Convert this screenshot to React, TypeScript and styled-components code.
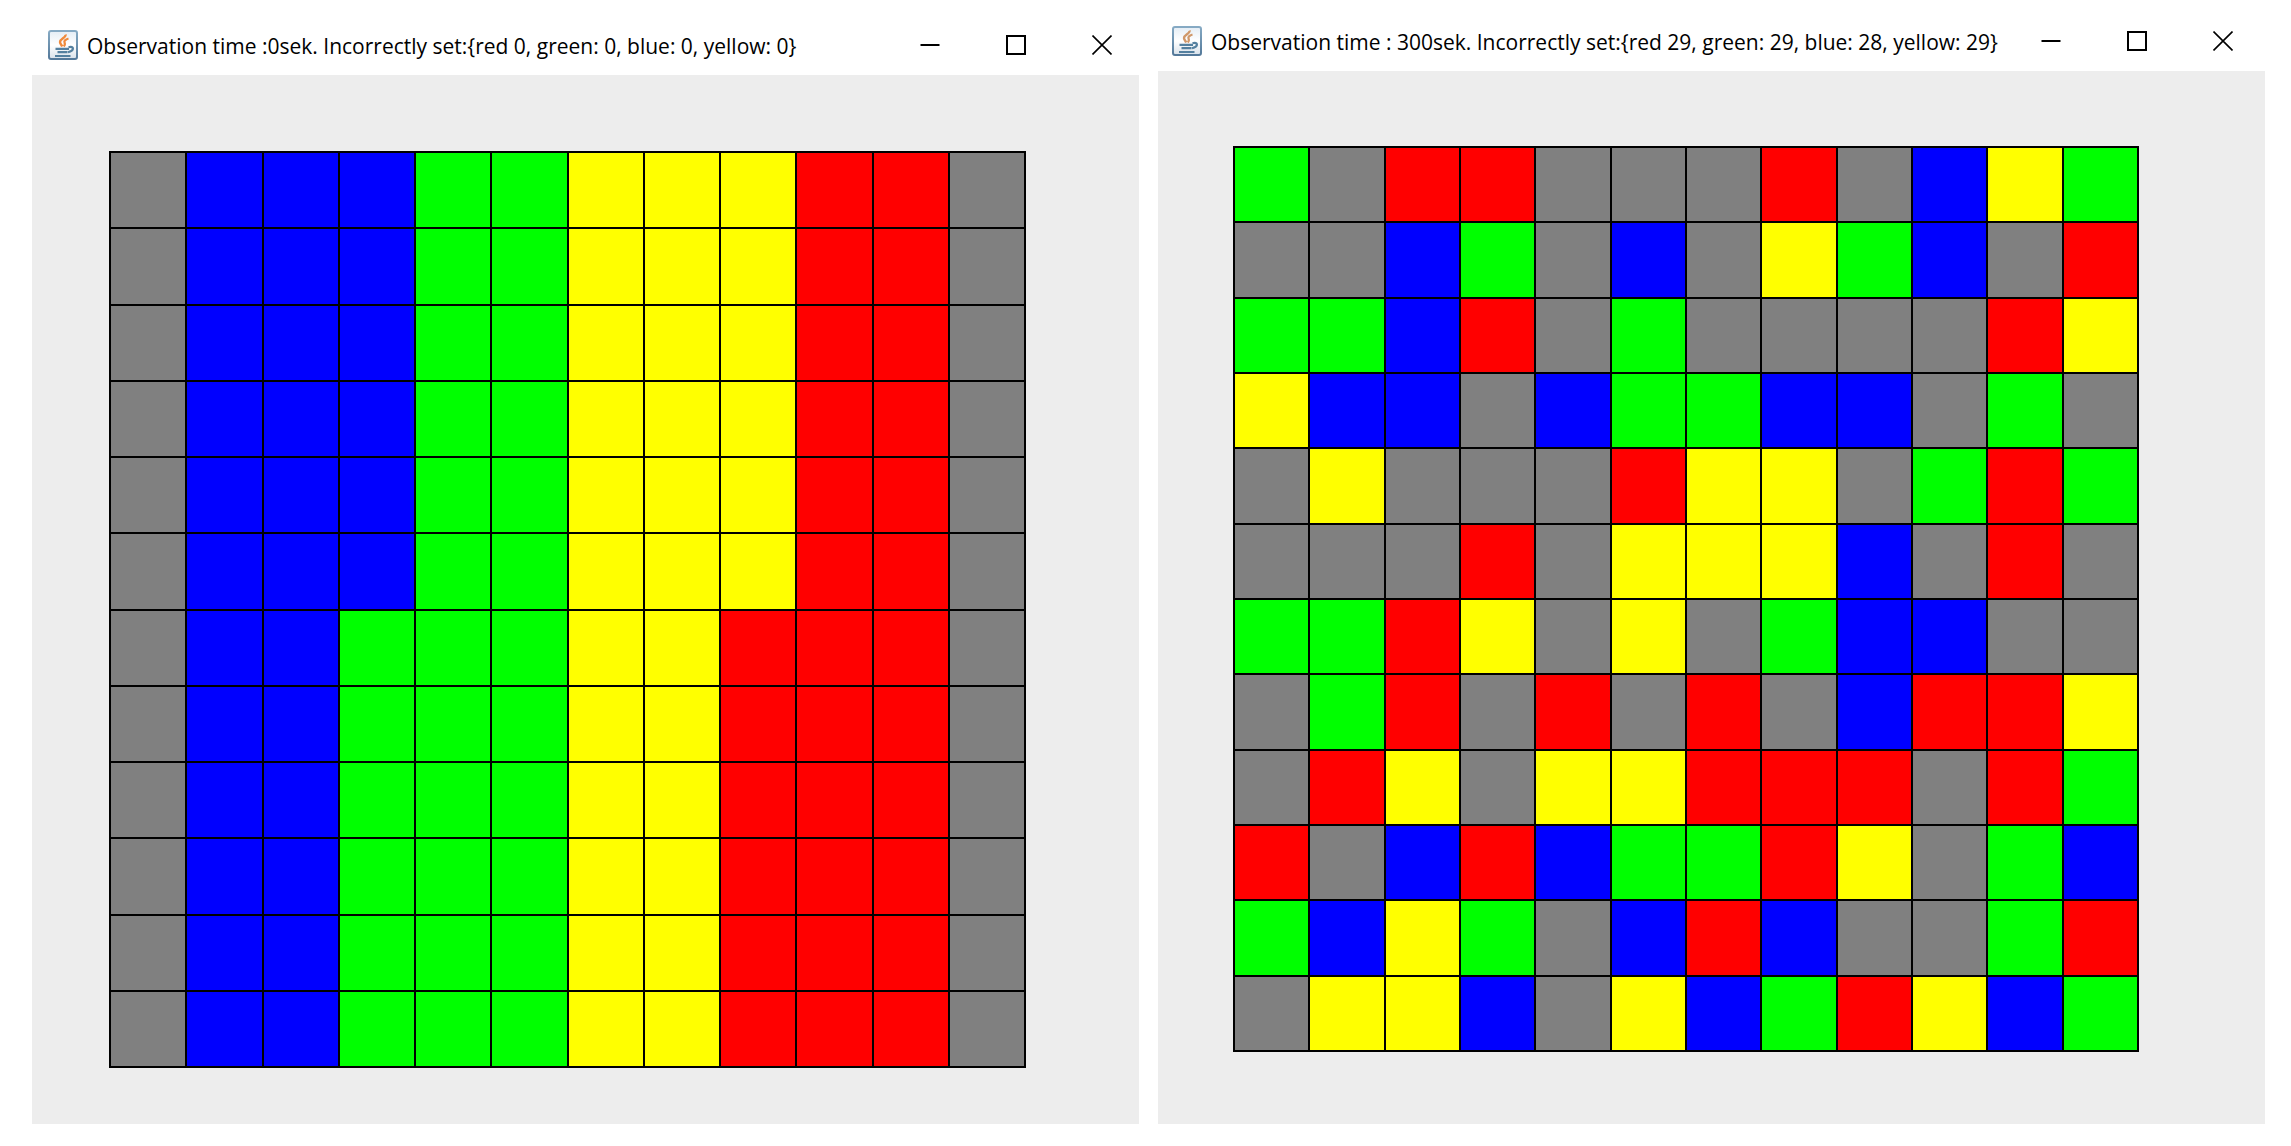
import React from "react";
import styled, { createGlobalStyle } from "styled-components";

const GlobalStyle = createGlobalStyle`
  * { box-sizing: border-box; }
  body { margin: 0; background: #fff; }
`;

const Desktop = styled.main`
  display: grid;
  grid-template-columns: 1fr 1fr;
  gap: 19px;
  padding: 0 26px 22px 32px;
  font-family: "Open Sans", "Noto Sans", sans-serif;
`;

const Frame = styled.section<{ $top: number }>`
  display: flex;
  flex-direction: column;
  min-width: 0;
  padding-top: ${(p) => p.$top}px;
`;

const TitleBar = styled.header<{ $left: number; $right: number }>`
  display: flex;
  align-items: center;
  gap: 9px;
  height: 60px;
  padding: 0 ${(p) => p.$right}px 0 ${(p) => p.$left}px;
`;

const Title = styled.h1`
  flex: 1;
  min-width: 0;
  margin: 0;
  padding-top: 2px;
  font-size: 21px;
  line-height: 30px;
  font-weight: 400;
  white-space: nowrap;
  color: #000;
`;

const Controls = styled.div`
  display: flex;
  gap: 12px;
`;

const ControlButton = styled.button`
  display: flex;
  align-items: center;
  justify-content: center;
  width: 74px;
  height: 40px;
  padding: 0;
  border: 0;
  background: transparent;
  color: #000;
`;

const Content = styled.div<{ $pad: string }>`
  flex: 1;
  padding: ${(p) => p.$pad};
  background: #ededed;
`;

const Board = styled.div`
  display: grid;
  grid-template-columns: repeat(12, 1fr);
  grid-template-rows: repeat(12, 1fr);
  gap: 2px;
  padding: 2px;
  aspect-ratio: 1;
  background: #000;
`;

const Cell = styled.div<{ $color: string }>`
  background: ${(p) => p.$color};
`;

const COLORS: Record<string, string> = {
  ".": "#808080",
  R: "#ff0000",
  G: "#00ff00",
  B: "#0000ff",
  Y: "#ffff00",
};

const SORTED = [
  ...Array<string>(6).fill(".BBBGGYYYRR."),
  ...Array<string>(6).fill(".BBGGGYYRRR."),
];

const SCATTERED = [
  "G.RR...R.BYG",
  "..BG.B.YGB.R",
  "GGBR.G....RY",
  "YBB.BGGBB.G.",
  ".Y...RYY.GRG",
  "...R.YYYB.R.",
  "GGRY.Y.GBB..",
  ".GR.R.R.BRRY",
  ".RY.YYRRR.RG",
  "R.BRBGGRY.GB",
  "GBYG.BRB..GR",
  ".YYB.YBGRYBG",
];

function JavaIcon({ id, flame }: { id: string; flame: string }) {
  return (
    <svg width="30" height="30" viewBox="0 0 30 30" fill="none" aria-hidden="true">
      <defs>
        <linearGradient id={`${id}-face`} x1="0" y1="0" x2="0" y2="1">
          <stop offset="0" stopColor="#e4edf5" />
          <stop offset="0.5" stopColor="#ffffff" />
          <stop offset="1" stopColor="#d8e1ea" />
        </linearGradient>
        <linearGradient id={`${id}-edge`} x1="0" y1="0" x2="0" y2="1">
          <stop offset="0" stopColor="#86aac4" />
          <stop offset="1" stopColor="#54799a" />
        </linearGradient>
      </defs>
      <rect x="1" y="1" width="28" height="28" rx="2" fill={`url(#${id}-face)`} stroke={`url(#${id}-edge)`} strokeWidth="2" />
      <path d="M17.500 4.500c1 3-5.500 4.200-5.500 7.500 0 1.800 1.500 2.500 2.200 4.500" stroke={flame} strokeWidth="2.400" />
      <path d="M20.500 8.500c-3.200 1-4.700 2.600-4 4.100.6 1.200.8 2.400-.8 3.900" stroke={flame} strokeWidth="2.200" />
      <path d="M7.500 18.800h13.500M9.500 22.200h10M7 26h15.500" stroke="#54809f" strokeWidth="2.200" />
      <path d="M20.500 17.200c6-1.500 6 3.500-.5 5" stroke="#54809f" strokeWidth="2.200" />
    </svg>
  );
}

interface WindowProps {
  id: string;
  title: string;
  rows: string[];
  top: number;
  barLeft: number;
  barRight: number;
  pad: string;
  flame: string;
}

function AppWindow({ id, title, rows, top, barLeft, barRight, pad, flame }: WindowProps) {
  return (
    <Frame $top={top} aria-labelledby={`${id}-title`}>
      <TitleBar $left={barLeft} $right={barRight}>
        <JavaIcon id={id} flame={flame} />
        <Title id={`${id}-title`}>{title}</Title>
        <Controls>
          <ControlButton type="button" aria-label="Minimize">
            <svg width="20" height="20" viewBox="0 0 20 20">
              <path d="M0.500 10h19" stroke="currentColor" strokeWidth="2" />
            </svg>
          </ControlButton>
          <ControlButton type="button" aria-label="Maximize">
            <svg width="20" height="20" viewBox="0 0 20 20">
              <rect x="1" y="1" width="18" height="18" fill="none" stroke="currentColor" strokeWidth="2" />
            </svg>
          </ControlButton>
          <ControlButton type="button" aria-label="Close">
            <svg width="20" height="20" viewBox="0 0 20 20">
              <path d="M0.500 0.500l19 19M19.500 0.500l-19 19" stroke="currentColor" strokeWidth="1.600" />
            </svg>
          </ControlButton>
        </Controls>
      </TitleBar>
      <Content $pad={pad}>
        <Board>
          {rows.flatMap((row, y) =>
            row.split("").map((key, x) => <Cell key={`${x}-${y}`} $color={COLORS[key]} />)
          )}
        </Board>
      </Content>
    </Frame>
  );
}

export default function App() {
  return (
    <>
      <GlobalStyle />
      <Desktop>
        <AppWindow
          id="sorted"
          title="Observation time :0sek. Incorrectly set:{red 0, green: 0, blue: 0, yellow: 0}"
          rows={SORTED}
          top={15}
          barLeft={16}
          barRight={0}
          pad="76px 113px 56px 77px"
          flame="#ef8a3c"
        />
        <AppWindow
          id="scattered"
          title="Observation time : 300sek. Incorrectly set:{red 29, green: 29, blue: 28, yellow: 29}"
          rows={SCATTERED}
          top={11}
          barLeft={14}
          barRight={5}
          pad="75px 126px 72px 75px"
          flame="#d0986a"
        />
      </Desktop>
    </>
  );
}
